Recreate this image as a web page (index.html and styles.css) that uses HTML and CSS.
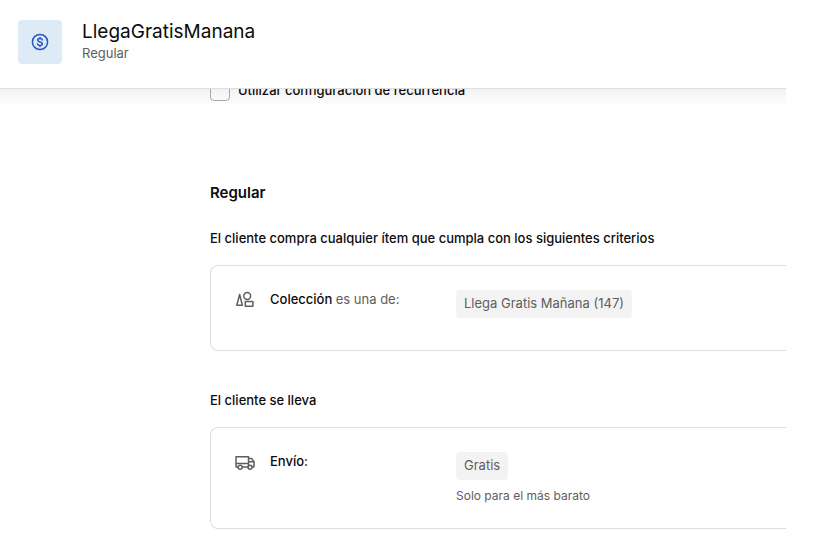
FILE: index.html
```html
<!DOCTYPE html>
<html lang="es">
<head>
  <meta charset="UTF-8">
  <meta name="viewport" content="width=device-width, initial-scale=1">
  <title>LlegaGratisManana</title>
  <link rel="stylesheet" href="styles.css">
</head>
<body>
  <div class="page">
    <header class="header">
      <div class="header-icon">
        <svg width="18" height="18" viewBox="0 0 18 18" fill="none" stroke="currentColor" stroke-width="1.5" stroke-linecap="round" stroke-linejoin="round" aria-hidden="true">
          <circle cx="9" cy="9" r="7.6" />
          <path d="M11.4 6.9C11.1 6 10.2 5.6 9 5.6C7.6 5.6 6.7 6.2 6.7 7.2C6.7 9.5 11.4 8.4 11.4 10.8C11.4 11.8 10.4 12.4 9 12.4C7.7 12.4 6.8 11.9 6.5 11M9 4.4V5.6M9 12.4V13.6" />
        </svg>
      </div>
      <div>
        <h1 class="title">LlegaGratisManana</h1>
        <p class="subtitle">Regular</p>
      </div>
    </header>

    <main class="content">
      <div class="option">
        <input class="checkbox" type="checkbox" id="recurrence">
        <label for="recurrence">Utilizar configuración de recurrencia</label>
      </div>

      <h2 class="section-title">Regular</h2>

      <section class="group">
        <h3 class="group-title">El cliente compra cualquier ítem que cumpla con los siguientes criterios</h3>
        <div class="card">
          <svg class="card-icon" width="20" height="20" viewBox="0 0 20 20" aria-hidden="true">
            <path d="M4.6 4.5L1.8 15.2H7.4Z" />
            <circle cx="12.2" cy="6" r="3.4" />
            <rect x="10.3" y="11.6" width="7.6" height="4.6" />
          </svg>
          <p class="card-label">Colección <span class="muted">es una de:</span></p>
          <div>
            <span class="tag">Llega Gratis Mañana (147)</span>
          </div>
        </div>
      </section>

      <section class="group">
        <h3 class="group-title">El cliente se lleva</h3>
        <div class="card">
          <svg class="card-icon" width="20" height="20" viewBox="0 0 20 20" aria-hidden="true">
            <path d="M3 15H1V4.8H13.5V15H7.2M1 11.6H13.5M13.5 6.4H16.6L19 9.8V15H17.2M13.5 9.8H19M13 15H12.8" />
            <circle cx="5.2" cy="15.2" r="2" />
            <circle cx="15" cy="15.2" r="2" />
          </svg>
          <p class="card-label">Envío:</p>
          <div>
            <span class="tag">Gratis</span>
            <p class="note">Solo para el más barato</p>
          </div>
        </div>
      </section>
    </main>
  </div>
</body>
</html>
```
FILE: styles.css
```css
* {
  box-sizing: border-box;
}
body {
  margin: 0;
  background: #fff;
  color: #0c0c0c;
  font-family: Inter, "Liberation Sans", sans-serif;
  font-size: 13px;
  line-height: 18px;
}
h1, h2, h3, p {
  margin: 0;
}

.page {
  margin-right: 34px;
  overflow: hidden;
}

.header {
  position: relative;
  z-index: 1;
  display: flex;
  gap: 20px;
  padding: 20px 18px 24px;
  background: #fff;
  border-bottom: 1px solid #ddd;
}
.header::after {
  content: "";
  position: absolute;
  top: 100%;
  left: 0;
  right: 0;
  margin-top: 1px;
  height: 18px;
  background: linear-gradient(rgba(0, 0, 0, 0.05), rgba(0, 0, 0, 0));
  pointer-events: none;
}
.header-icon {
  display: flex;
  align-items: center;
  justify-content: center;
  width: 44px;
  height: 44px;
  border-radius: 4px;
  background: #deebf6;
  color: #2a54c0;
}
.title {
  font-size: 19px;
  font-weight: 400;
  line-height: 24px;
}
.subtitle {
  color: #5e5e5e;
}

.content {
  padding-left: 210px;
}
.option {
  display: flex;
  align-items: flex-start;
  gap: 8px;
  margin-top: -8px;
  margin-bottom: 80px;
  font-weight: 500;
}
.checkbox {
  appearance: none;
  width: 20px;
  height: 20px;
  margin: 0;
  border: 1px solid #adadad;
  border-radius: 4px;
  background: #fff;
}
.checkbox:checked {
  background: #2a54c0;
}
.section-title {
  margin-bottom: 24px;
  font-size: 15px;
  font-weight: 600;
  line-height: 24px;
}

.group {
  margin-bottom: 40px;
}
.group:last-child {
  margin-bottom: 15px;
}
.group-title {
  margin-bottom: 18px;
  font-size: 13px;
  font-weight: 500;
}
.card {
  display: grid;
  grid-template-columns: 35px 186px 1fr;
  padding: 24px;
  border: 1px solid #ddd;
  border-right: none;
  border-radius: 8px 0 0 8px;
}
.card-icon {
  fill: none;
  stroke: #5e5e5e;
  stroke-width: 1.5;
  stroke-linejoin: round;
}
.card-label {
  font-weight: 500;
}
.muted {
  color: #5e5e5e;
  font-weight: 400;
}
.tag {
  display: block;
  width: fit-content;
  margin-bottom: 8px;
  padding: 4px 8px 6px;
  border-radius: 4px;
  background: #f3f3f3;
  color: #5e5e5e;
}
.note {
  color: #5e5e5e;
  font-size: 12px;
  line-height: 16px;
}
```
